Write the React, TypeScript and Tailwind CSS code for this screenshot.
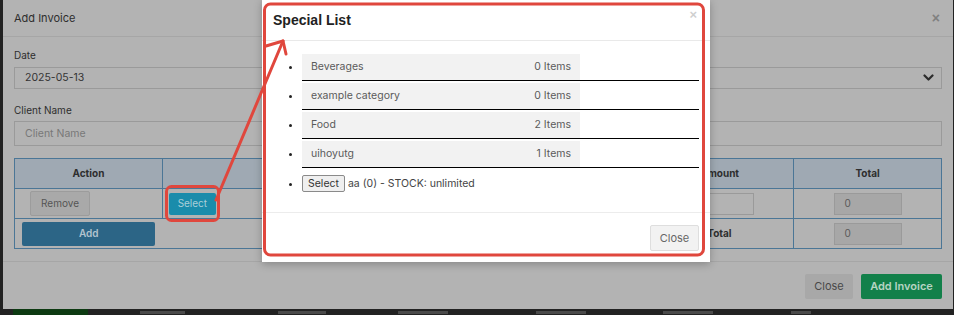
import React from 'react';

const rows = [
  { name: 'Beverages', count: 0 },
  { name: 'example category', count: 0 },
  { name: 'Food', count: 2 },
  { name: 'uihoyutg', count: 1 },
];

const Chevron = () => (
  <svg width="11" height="8" viewBox="0 0 11 8" fill="none">
    <path d="M1.5 1.5 5.5 5.5 9.5 1.5" stroke="#2b2b2b" strokeWidth="2.2" strokeLinecap="round" strokeLinejoin="round" />
  </svg>
);

// Invoice form behind the special list dialog (already dimmed by its backdrop)
const InvoiceModal = () => (
  <div className="ml-[3px] w-[950px] h-[309px] bg-[#b3b3b3] flex flex-col text-[#2e2e2e]">
    <div className="h-[37px] shrink-0 border-b border-[#a6a6a6] pl-[11px] pr-[13px] flex items-center justify-between">
      <span className="text-[11px]">Add Invoice</span>
      <span className="text-[14px] font-bold text-[#808080] leading-none font-['Liberation_Sans']">×</span>
    </div>

    <div className="px-[11px] pt-[11px] pb-[12px] flex-1">
      <div className="text-[10px] leading-[14px]">Date</div>
      <div className="mt-[5px] h-[22px] border border-[#9a9a9a] pl-[10px] pr-[7px] flex items-center justify-between text-[10.5px] text-[#333]">
        <span>2025-05-13</span>
        <Chevron />
      </div>

      <div className="mt-[14px] text-[10px] leading-[14px]">Client Name</div>
      <div className="mt-[4px] h-[25px] border border-[#9a9a9a] px-[10px] flex items-center text-[10.5px] text-[#787878]">
        Client Name
      </div>

      <table className="mt-[12px] w-full border-collapse text-[10px]">
        <thead>
          <tr className="h-[30px] bg-[#9fa9b3]">
            <th className="w-[148px] border border-[#4b7696] font-bold">Action</th>
            <th className="w-[168px] border border-[#4b7696]"></th>
            <th className="w-[160px] border border-[#4b7696]"></th>
            <th className="w-[156px] border border-[#4b7696]"></th>
            <th className="w-[148px] border border-[#4b7696] font-bold">Amount</th>
            <th className="w-[148px] border border-[#4b7696] font-bold">Total</th>
          </tr>
        </thead>
        <tbody>
          <tr className="h-[30px]">
            <td className="border border-[#4b7696] pl-[15px]">
              <div className="w-[60px] h-[25px] bg-[#a9a9a9] border border-[#9c9c9c] rounded-[2px] flex items-center justify-center text-[#555]">
                Remove
              </div>
            </td>
            <td className="border border-[#4b7696] pl-[6px]">
              <div className="w-[47px] h-[22px] bg-[#1a8cab] rounded-[2px] flex items-center justify-center text-[#a9cfd9]">
                Select
              </div>
            </td>
            <td className="border border-[#4b7696]"></td>
            <td className="border border-[#4b7696]"></td>
            <td className="border border-[#4b7696]">
              <div className="ml-[38px] w-[70px] h-[22px] border border-[#9a9a9a]"></div>
            </td>
            <td className="border border-[#4b7696]">
              <div className="mx-auto w-[68px] h-[22px] bg-[#a7a7a7] border border-[#9a9a9a] pl-[10px] flex items-center text-[#5a5a5a]">0</div>
            </td>
          </tr>
          <tr className="h-[30px]">
            <td className="border-l border-b border-[#4b7696] px-[7px]">
              <div className="h-[24px] bg-[#2c6586] rounded-[2px] flex items-center justify-center text-[#b3c3cf] font-semibold">
                Add
              </div>
            </td>
            <td className="border-b border-[#4b7696]"></td>
            <td className="border-b border-[#4b7696]"></td>
            <td className="border-b border-[#4b7696]"></td>
            <td className="border-b border-[#4b7696] text-center font-bold">Total</td>
            <td className="border border-[#4b7696]">
              <div className="mx-auto w-[68px] h-[22px] bg-[#a7a7a7] border border-[#9a9a9a] pl-[10px] flex items-center text-[#5a5a5a]">0</div>
            </td>
          </tr>
        </tbody>
      </table>
    </div>

    <div className="h-[49px] shrink-0 border-t border-[#a6a6a6] pr-[11px] pt-[12px] flex justify-end gap-[8px] text-[11px]">
      <div className="w-[48px] h-[25px] bg-[#a8a8a8] rounded-[2px] flex items-center justify-center text-[#484848]">Close</div>
      <div className="w-[81px] h-[25px] bg-[#12804a] rounded-[2px] flex items-center justify-center text-[#b6d4c2] font-semibold">Add Invoice</div>
    </div>
  </div>
);

const SpecialList = () => (
  <div className="absolute left-[262px] top-0 w-[448px] h-[262px] bg-white flex flex-col shadow-[0_2px_8px_rgba(0,0,0,0.25)]">
    <div className="h-[41px] shrink-0 border-b border-[#e9e9e9] pl-[11px] pr-[13px] flex items-center justify-between">
      <span className="font-['Liberation_Sans'] font-bold text-[14px] text-[#222]">Special List</span>
      <span className="font-['Liberation_Sans'] font-bold text-[13px] text-[#cfcfcf] -mt-[10px]">×</span>
    </div>
    <div className="flex-1 pt-[13px] pl-[11px] pr-[11px]">
      <ul className="list-disc pl-[29px] text-[10.5px] text-[#5a5a5a] marker:text-[#222]">
        {rows.map((r) => (
          <li key={r.name} className="mb-[2px] border-b border-black">
            <div className="w-[278px] h-[26px] bg-[#f2f2f2] px-[9px] flex items-center justify-between">
              <span>{r.name}</span>
              <span>{r.count} Items</span>
            </div>
          </li>
        ))}
        <li className="mt-[7px] text-[#444]">
          <span className="inline-flex items-center">
            <span className="h-[17px] px-[5px] border border-[#8a8a8a] rounded-[2px] bg-[#efefef] flex items-center text-[#333]">Select</span>
            <span className="ml-[3px]">aa (0) - STOCK: unlimited</span>
          </span>
        </li>
      </ul>
    </div>
    <div className="h-[50px] shrink-0 border-t border-[#ececec] pr-[11px] pt-[12px] flex justify-end">
      <div className="w-[49px] h-[26px] bg-[#f2f2f2] border border-[#dedede] rounded-[2px] flex items-center justify-center text-[11px] text-[#666]">Close</div>
    </div>
  </div>
);

// red highlight annotations drawn on top of the screenshot
const Annotations = () => (
  <svg className="absolute left-0 top-0 pointer-events-none" width="954" height="315" viewBox="0 0 954 315">
    <g stroke="#e0473d" strokeWidth="3" fill="none" strokeLinecap="round" strokeLinejoin="round">
      <rect x="264.5" y="4" width="439" height="251" rx="6" />
      <rect x="166.5" y="186.5" width="52" height="34" rx="5" />
      <path d="M216 200 L283 41" />
      <path d="M266 46 L283 41 L286 54" />
    </g>
  </svg>
);

export default function App() {
  return (
    <div className="relative w-[954px] h-[315px] overflow-hidden bg-[#222] font-['Inter',sans-serif]">
      <InvoiceModal />
      {/* page behind the dialogs, only the tops of its row show at the bottom edge */}
      <div className="h-[6px] flex items-start pt-[2px]">
        <div className="ml-[13px] -mt-[2px] w-[75px] h-[6px] bg-[#0d3a12]"></div>
        <div className="ml-[52px] w-[45px] h-[3px] bg-[#4a4a4a]"></div>
        <div className="ml-[93px] w-[48px] h-[3px] bg-[#4a4a4a]"></div>
        <div className="ml-[72px] w-[50px] h-[3px] bg-[#4a4a4a]"></div>
        <div className="ml-[88px] w-[50px] h-[3px] bg-[#4a4a4a]"></div>
        <div className="ml-[77px] w-[50px] h-[3px] bg-[#4a4a4a]"></div>
        <div className="ml-[78px] w-[20px] h-[3px] bg-[#4a4a4a]"></div>
      </div>
      <SpecialList />
      <Annotations />
    </div>
  );
}
